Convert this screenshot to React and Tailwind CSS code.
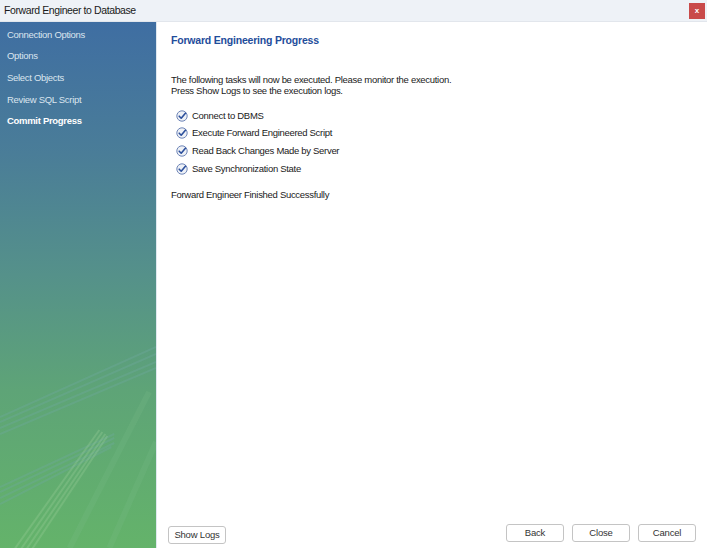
import React from 'react';

const font = { fontFamily: '"Liberation Sans", Arial, sans-serif' };

const steps = ['Connection Options', 'Options', 'Select Objects', 'Review SQL Script', 'Commit Progress'];
const tasks = [
  'Connect to DBMS',
  'Execute Forward Engineered Script',
  'Read Back Changes Made by Server',
  'Save Synchronization State',
];

function CheckIcon() {
  return (
    <svg width="12" height="12" viewBox="0 0 12 12" className="shrink-0">
      <circle cx="6" cy="6" r="5.2" fill="#eef1f6" stroke="#6f86b8" strokeWidth="1" />
      <path d="M3.2 6.2 L5.2 8.2 L9.4 3.2" fill="none" stroke="#2b4f9c" strokeWidth="1.6" strokeLinecap="round" strokeLinejoin="round" />
    </svg>
  );
}

function Streaks() {
  return (
    <svg className="absolute inset-0 w-full h-full" viewBox="0 0 157 526" preserveAspectRatio="none">
      <g stroke="#6fa8a0" strokeOpacity="0.35" fill="none">
        <line x1="0" y1="395" x2="157" y2="325" strokeWidth="2" />
        <line x1="0" y1="400" x2="157" y2="332" strokeWidth="2" />
        <line x1="0" y1="406" x2="157" y2="340" strokeWidth="2" />
        <line x1="0" y1="412" x2="157" y2="346" strokeWidth="2" />
        <line x1="0" y1="465" x2="115" y2="412" strokeWidth="2" />
        <line x1="0" y1="470" x2="115" y2="416" strokeWidth="2" />
        <line x1="0" y1="476" x2="115" y2="421" strokeWidth="2" />
        <line x1="0" y1="482" x2="112" y2="425" strokeWidth="2" />
      </g>
      <g stroke="#9ed09a" strokeOpacity="0.3" fill="none">
        <line x1="14" y1="528" x2="100" y2="408" strokeWidth="2" />
        <line x1="19" y1="530" x2="103" y2="410" strokeWidth="2" />
        <line x1="24" y1="531" x2="106" y2="412" strokeWidth="2" />
        <line x1="29" y1="532" x2="108" y2="414" strokeWidth="2" />
      </g>
      <g stroke="#7cc08a" strokeOpacity="0.2" fill="none">
        <line x1="70" y1="526" x2="150" y2="370" strokeWidth="6" />
        <line x1="110" y1="526" x2="157" y2="420" strokeWidth="6" />
      </g>
    </svg>
  );
}

function Btn({ children }) {
  return (
    <button className="h-[18px] w-[58px] rounded-[3px] border border-[#c4c4c4] bg-white text-[9.5px] tracking-[-0.2px] text-[#333] leading-none">
      {children}
    </button>
  );
}

export default function App() {
  return (
    <div className="w-[707px] h-[548px] flex flex-col bg-white overflow-hidden" style={font}>
      <div className="h-[22px] shrink-0 bg-[#eef2f7] border-b border-[#e2e6ec] flex items-center justify-between pl-[4px] pr-[2px]">
        <span className="text-[10.5px] tracking-[-0.4px] text-[#1a1a1a]">Forward Engineer to Database</span>
        <div className="w-[16px] h-[16px] bg-[#c94a4a] flex items-center justify-center text-white text-[8px] font-bold leading-none">x</div>
      </div>
      <div className="flex flex-1 min-h-0">
        <div className="relative w-[157px] shrink-0 border-r border-[#dfe8ef] bg-[linear-gradient(180deg,#3f6ea2_0%,#4a7d98_25%,#55918a_48%,#5ea477_70%,#64b36a_100%)]">
          <Streaks />
          <div className="relative flex flex-col pt-[2px] pl-[7px]">
            {steps.map((s, i) => (
              <div
                key={s}
                className={`h-[21.7px] flex items-center text-[9.5px] tracking-[-0.3px] ${i === 4 ? 'font-bold text-white' : 'text-[#dbe5ef]'}`}
              >
                {s}
              </div>
            ))}
          </div>
        </div>
        <div className="flex-1 flex flex-col pl-[14px] pr-[12px] pb-[3px] text-[#1a1a1a]">
          <h1 className="mt-[11px] text-[10.5px] tracking-[-0.2px] font-bold text-[#1f4d9b]">Forward Engineering Progress</h1>
          <p className="mt-[25px] text-[9.5px] leading-[11px] tracking-[-0.3px]">
            The following tasks will now be executed. Please monitor the execution.
            <br />
            Press Show Logs to see the execution logs.
          </p>
          <div className="mt-[11px] pl-[5px] flex flex-col">
            {tasks.map((t) => (
              <div key={t} className="h-[17.8px] flex items-center gap-[4px] text-[9.5px] tracking-[-0.3px]">
                <CheckIcon />
                <span>{t}</span>
              </div>
            ))}
          </div>
          <p className="mt-[10px] text-[9.5px] tracking-[-0.3px]">Forward Engineer Finished Successfully</p>
          <div className="mt-auto flex items-center">
            <div className="-ml-[3px]"><Btn>Show Logs</Btn></div>
            <div className="ml-auto -mr-[1px] flex gap-[8px]">
              <Btn>Back</Btn>
              <Btn>Close</Btn>
              <Btn>Cancel</Btn>
            </div>
          </div>
        </div>
      </div>
    </div>
  );
}
